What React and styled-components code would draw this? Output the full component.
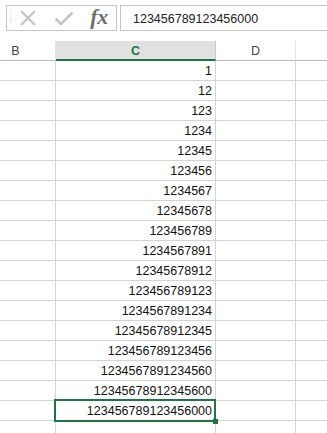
import React from "react";
import styled, { createGlobalStyle } from "styled-components";

const Global = createGlobalStyle`
  html, body { margin: 0; padding: 0; background: #ffffff; }
  body { font-family: "Liberation Sans", Arial, sans-serif; overflow: hidden; }
`;

const Page = styled.div`
  width: 327px;
  height: 433px;
  overflow: hidden;
  background: #fff;
`;

const FormulaBar = styled.div`
  display: flex;
  align-items: stretch;
  gap: 3px;
  padding: 5px 0 0 6px;
  height: 26px;
  margin-bottom: 10px;
`;

const NameBox = styled.div`
  position: relative;
  width: 109px;
  border: 1px solid #c6c6c6;
  display: flex;
  align-items: center;
  box-sizing: content-box;
  height: 24px;
`;

const Grip = styled.div`
  width: 1px;
  height: 14px;
  margin-left: 3px;
  border-left: 1px dotted #e2e2e2;
`;

const IconSlot = styled.div`
  display: flex;
  align-items: center;
  justify-content: center;
  width: ${(p) => p.$w}px;
  margin-left: ${(p) => p.$ml}px;
`;

const Fx = styled.span`
  font-family: "Liberation Serif", "Times New Roman", serif;
  font-style: italic;
  font-size: 22px;
  font-weight: 700;
  color: #6e6e6e;
  line-height: 1;
  margin-top: -2px;
  letter-spacing: -0.5px;
`;

const Input = styled.div`
  flex: 1;
  border: 1px solid #c6c6c6;
  border-right: none;
  display: flex;
  align-items: center;
  padding-left: 12px;
  font-size: 12.5px;
  color: #222;
  padding-top: 1px;
  box-sizing: border-box;
  height: 26px;
`;

const GridWrap = styled.div`
  overflow: hidden;
`;

const Grid = styled.div`
  display: grid;
  grid-template-columns: 80px 160px 80px 80px;
  grid-auto-rows: 20px;
  margin-left: -24px;
`;

const HeadCell = styled.div`
  box-sizing: border-box;
  border-right: 1px solid ${(p) => (p.$sel ? "#c8c8c8" : "#e3e3e3")};
  border-bottom: ${(p) => (p.$sel ? "2px solid #217346" : "1px solid #b9b9b9")};
  background: ${(p) => (p.$sel ? "#e1e1e1" : "#ffffff")};
  color: ${(p) => (p.$sel ? "#217346" : "#444444")};
  font-weight: ${(p) => (p.$sel ? 700 : 400)};
  font-size: 12.5px;
  display: flex;
  align-items: center;
  justify-content: center;
  padding-top: 1px;
`;

const Cell = styled.div`
  position: relative;
  box-sizing: border-box;
  border-right: 1px solid #d4d4d4;
  border-bottom: 1px solid #d4d4d4;
  font-size: 12.5px;
  color: #111;
  display: flex;
  align-items: flex-end;
  justify-content: flex-end;
  padding: 0 3px 3px 0;
  line-height: 1;
  white-space: nowrap;
`;

const Selection = styled.div`
  position: absolute;
  z-index: 2;
  left: -2px;
  top: -2px;
  right: -1px;
  bottom: -2px;
  border: 2px solid #217346;
  pointer-events: none;
`;

const Handle = styled.div`
  position: absolute;
  right: -4px;
  bottom: -4px;
  width: 5px;
  height: 5px;
  background: #217346;
`;

const values = [
  "1",
  "12",
  "123",
  "1234",
  "12345",
  "123456",
  "1234567",
  "12345678",
  "123456789",
  "1234567891",
  "12345678912",
  "123456789123",
  "1234567891234",
  "12345678912345",
  "123456789123456",
  "1234567891234560",
  "12345678912345600",
  "123456789123456000",
];

export default function App() {
  return (
    <Page>
      <Global />
      <FormulaBar>
        <NameBox>
          <Grip />
          <IconSlot $w={20} $ml={6}>
            <svg width="18" height="16" viewBox="0 0 18 16">
              <path d="M2 1 L16 15 M16 1 L2 15" stroke="#c4c4c4" strokeWidth="2.2" fill="none" />
            </svg>
          </IconSlot>
          <IconSlot $w={22} $ml={15}>
            <svg width="20" height="15" viewBox="0 0 20 15">
              <path d="M1.5 7.5 L7 13 L18.5 1.5" stroke="#c4c4c4" strokeWidth="2.6" fill="none" />
            </svg>
          </IconSlot>
          <IconSlot $w={22} $ml={13}>
            <Fx>fx</Fx>
          </IconSlot>
        </NameBox>
        <Input>123456789123456000</Input>
      </FormulaBar>
      <GridWrap>
        <Grid>
          <HeadCell>B</HeadCell>
          <HeadCell $sel>C</HeadCell>
          <HeadCell>D</HeadCell>
          <HeadCell />
          {values.map((v, i) => (
            <React.Fragment key={v}>
              <Cell />
              <Cell>
                {v}
                {i === values.length - 1 && (
                  <Selection>
                    <Handle />
                  </Selection>
                )}
              </Cell>
              <Cell />
              <Cell />
            </React.Fragment>
          ))}
          <Cell />
          <Cell />
          <Cell />
          <Cell />
        </Grid>
      </GridWrap>
    </Page>
  );
}
